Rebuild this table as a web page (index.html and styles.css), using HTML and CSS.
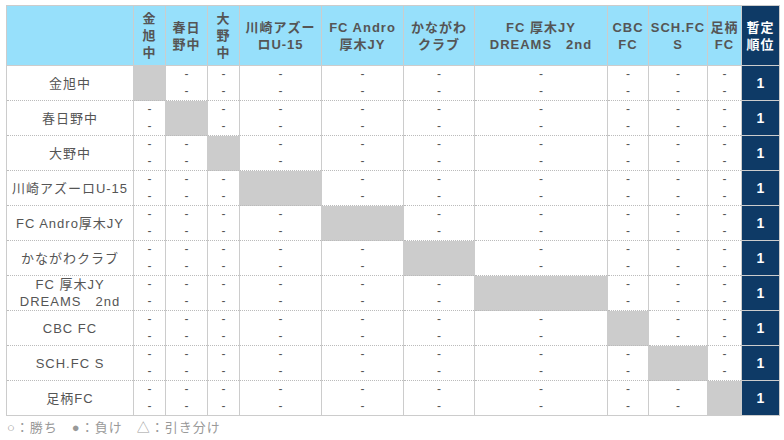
FILE: index.html
```html
<!DOCTYPE html>
<html lang="ja">
<head>
<meta charset="utf-8">
<link rel="stylesheet" href="styles.css">
</head>
<body>
<table class="league">
  <colgroup>
    <col style="width:127px"><col style="width:32px"><col style="width:42px"><col style="width:32px"><col style="width:82px"><col style="width:82px"><col style="width:71px"><col style="width:133px"><col style="width:41px"><col style="width:59px"><col style="width:34px"><col style="width:38px">
  </colgroup>
  <thead>
    <tr>
      <th class="corner"></th>
      <th>金<br>旭<br>中</th>
      <th>春日<br>野中</th>
      <th>大<br>野<br>中</th>
      <th>川崎アズー<br>ロU-15</th>
      <th>FC Andro<br>厚木JY</th>
      <th>かながわ<br>クラブ</th>
      <th>FC 厚木JY<br>DREAMS　2nd</th>
      <th>CBC<br>FC</th>
      <th>SCH.FC<br>S</th>
      <th>足柄<br>FC</th>
      <th class="rank">暫定<br>順位</th>
    </tr>
  </thead>
  <tbody>
    <tr><td class="team">金旭中</td><td class="self"></td><td>-<br>-</td><td>-<br>-</td><td>-<br>-</td><td>-<br>-</td><td>-<br>-</td><td>-<br>-</td><td>-<br>-</td><td>-<br>-</td><td>-<br>-</td><td class="rank">1</td></tr>
    <tr><td class="team">春日野中</td><td>-<br>-</td><td class="self"></td><td>-<br>-</td><td>-<br>-</td><td>-<br>-</td><td>-<br>-</td><td>-<br>-</td><td>-<br>-</td><td>-<br>-</td><td>-<br>-</td><td class="rank">1</td></tr>
    <tr><td class="team">大野中</td><td>-<br>-</td><td>-<br>-</td><td class="self"></td><td>-<br>-</td><td>-<br>-</td><td>-<br>-</td><td>-<br>-</td><td>-<br>-</td><td>-<br>-</td><td>-<br>-</td><td class="rank">1</td></tr>
    <tr><td class="team">川崎アズーロU-15</td><td>-<br>-</td><td>-<br>-</td><td>-<br>-</td><td class="self"></td><td>-<br>-</td><td>-<br>-</td><td>-<br>-</td><td>-<br>-</td><td>-<br>-</td><td>-<br>-</td><td class="rank">1</td></tr>
    <tr><td class="team">FC Andro厚木JY</td><td>-<br>-</td><td>-<br>-</td><td>-<br>-</td><td>-<br>-</td><td class="self"></td><td>-<br>-</td><td>-<br>-</td><td>-<br>-</td><td>-<br>-</td><td>-<br>-</td><td class="rank">1</td></tr>
    <tr><td class="team">かながわクラブ</td><td>-<br>-</td><td>-<br>-</td><td>-<br>-</td><td>-<br>-</td><td>-<br>-</td><td class="self"></td><td>-<br>-</td><td>-<br>-</td><td>-<br>-</td><td>-<br>-</td><td class="rank">1</td></tr>
    <tr><td class="team">FC 厚木JY<br>DREAMS　2nd</td><td>-<br>-</td><td>-<br>-</td><td>-<br>-</td><td>-<br>-</td><td>-<br>-</td><td>-<br>-</td><td class="self"></td><td>-<br>-</td><td>-<br>-</td><td>-<br>-</td><td class="rank">1</td></tr>
    <tr><td class="team">CBC FC</td><td>-<br>-</td><td>-<br>-</td><td>-<br>-</td><td>-<br>-</td><td>-<br>-</td><td>-<br>-</td><td>-<br>-</td><td class="self"></td><td>-<br>-</td><td>-<br>-</td><td class="rank">1</td></tr>
    <tr><td class="team">SCH.FC S</td><td>-<br>-</td><td>-<br>-</td><td>-<br>-</td><td>-<br>-</td><td>-<br>-</td><td>-<br>-</td><td>-<br>-</td><td>-<br>-</td><td class="self"></td><td>-<br>-</td><td class="rank">1</td></tr>
    <tr><td class="team">足柄FC</td><td>-<br>-</td><td>-<br>-</td><td>-<br>-</td><td>-<br>-</td><td>-<br>-</td><td>-<br>-</td><td>-<br>-</td><td>-<br>-</td><td>-<br>-</td><td class="self"></td><td class="rank">1</td></tr>
  </tbody>
</table>
<p class="legend">○：勝ち　●：負け　△：引き分け</p>
</body>
</html>
```

FILE: styles.css
```css
html, body {
  margin: 0;
  padding: 0;
  background: #fff;
}
body {
  padding: 5px 5px 0 6px;
  font-family: "Liberation Sans", Arial, "Noto Sans CJK JP", sans-serif;
  font-size: 13px;
  color: #555;
}
.league {
  border-collapse: collapse;
  table-layout: fixed;
  width: 773px;
  border: 1px solid #ccc;
}
.league th {
  background: #97e0fb;
  color: #555;
  font-weight: bold;
  letter-spacing: 1px;
  line-height: 17px;
  padding: 3px 0;
  height: 53px;
  text-align: center;
  vertical-align: middle;
  border: 1px solid #ccc;
}
.league td {
  border-left: 1px solid #ccc;
  border-right: 1px solid #ccc;
  border-bottom: 1px dotted #bbb;
  text-align: center;
  vertical-align: middle;
  height: 34px;
  padding: 0;
  line-height: 17px;
  font-size: 12px;
  color: #555;
}
.league td.team {
  font-size: 13px;
  letter-spacing: 1px;
  line-height: 17px;
}
.league td.self {
  background: #cccccc;
}
.league .rank {
  background: #0e3a66;
  color: #fff;
  font-weight: bold;
  border: 1px solid #ccc;
}
.league td.rank {
  font-size: 14px;
  border-bottom: 1px solid #ccc;
}
.legend {
  margin: 1px 0 0 1px;
  font-size: 13px;
  color: #999;
  letter-spacing: 1px;
}
```
